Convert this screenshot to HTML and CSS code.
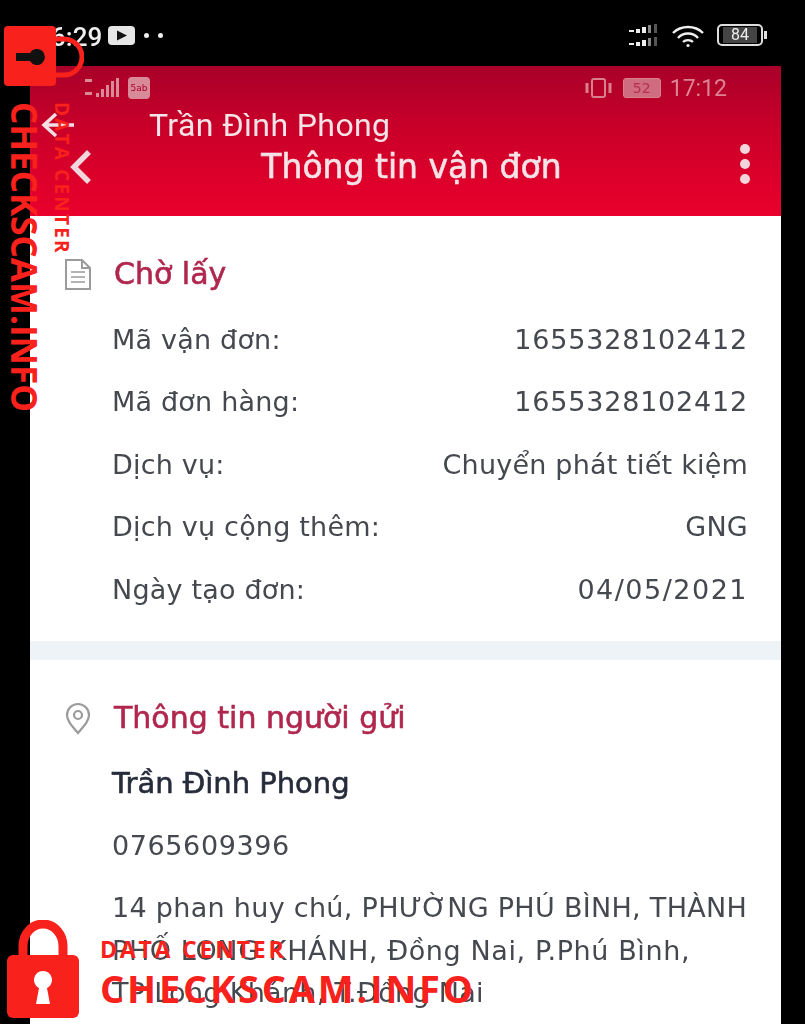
FILE: index.html
```html
<!DOCTYPE html>
<html lang="vi">
<head>
    <meta charset="UTF-8">
    <meta name="viewport" content="width=device-width, initial-scale=1.0">
    <title>Thông tin vận đơn</title>
    <link rel="stylesheet" href="styles.css">
</head>
<body>

<div class="page">
    <div class="status-bar">
        <div class="status-left">
            <span class="status-time">6:29</span>
            <svg class="yt-icon" width="27" height="19" viewBox="0 0 27 19">
                <rect width="27" height="19" rx="4" fill="#e6e6e6"/>
                <path d="M9 4.5 L19 9.5 L9 14.5 Z" fill="#111"/>
            </svg>
            <span class="status-dot"></span>
            <span class="status-dot"></span>
        </div>
        <div class="status-right">
            <svg width="30" height="24" viewBox="0 0 30 24" fill="#eee">
                <rect x="0" y="6" width="5" height="2"/><rect x="7" y="5" width="4" height="4"/><rect x="13" y="3" width="4" height="6"/><rect x="19" y="1" width="3" height="8" fill="#888"/><rect x="25" y="0" width="3" height="9" fill="#555"/>
                <rect x="0" y="19" width="5" height="2"/><rect x="7" y="18" width="4" height="4"/><rect x="13" y="16" width="4" height="6"/><rect x="19" y="14" width="3" height="8" fill="#888"/><rect x="25" y="13" width="3" height="9" fill="#555"/>
            </svg>
            <svg class="wifi" width="32" height="26" viewBox="0 0 32 26" fill="none" stroke="#eee" stroke-width="2.4">
                <path d="M1 9 C9 1 23 1 31 9"/>
                <path d="M6 14 C11 8 21 8 26 14"/>
                <path d="M11 18 C13.500 15.500 18.500 15.500 21 18"/>
                <circle cx="16" cy="21.500" r="1.600" fill="#eee" stroke="none"/>
            </svg>
            <div class="battery"><span>84</span></div>
            <span class="battery-tip"></span>
        </div>
    </div>

    <div class="screen">
        <header class="app-header">
            <div class="inner-status">
                <div class="inner-left">
                    <svg width="34" height="22" viewBox="0 0 34 22" fill="#d98a98">
                        <rect x="0" y="2" width="7" height="3"/><rect x="0" y="15" width="7" height="3"/>
                        <rect x="11" y="16" width="3" height="4"/><rect x="16" y="12" width="3" height="8"/><rect x="21" y="8" width="3" height="12"/><rect x="26" y="4" width="3" height="16"/><rect x="31" y="1" width="3" height="19"/>
                    </svg>
                    <span class="sim-badge">5ab</span>
                </div>
                <div class="inner-right">
                    <svg width="27" height="22" viewBox="0 0 27 22" fill="none" stroke="#d9808f" stroke-width="2">
                        <rect x="7" y="2" width="13" height="18" rx="2"/>
                        <path d="M2 6 V16 M25 6 V16" stroke-width="3"/>
                    </svg>
                    <div class="inner-battery"><span>52</span></div>
                    <span class="inner-time">17:12</span>
                </div>
            </div>
            <div class="name-row">
                <svg width="34" height="34" viewBox="0 0 34 34" fill="none" stroke="#f5dfe4" stroke-width="3.500">
                    <path d="M15 6 L3 17 L15 28 M3 17 H33"/>
                </svg>
                <span class="name-text">Trần Đình Phong</span>
            </div>
            <div class="title-row">
                <svg width="24" height="36" viewBox="0 0 24 36" fill="none" stroke="#f3d5dc" stroke-width="5.500">
                    <path d="M20 3 L5 18 L20 33"/>
                </svg>
                <span class="title-text">Thông tin vận đơn</span>
                <div class="more-dots"><span></span><span></span><span></span></div>
            </div>
        </header>

        <section class="panel panel-order">
            <div class="panel-head">
                <svg class="panel-icon" width="28" height="33" viewBox="0 0 28 33" fill="none" stroke="#9b9b9b" stroke-width="2">
                    <path d="M2 2 H18 L26 10 V31 H2 Z M18 2 V10 H26"/>
                    <path d="M7 14 H21 M7 19 H21 M7 24 H21" stroke-width="1.500"/>
                </svg>
                <h2>Chờ lấy</h2>
            </div>
            <div class="info-row"><span>Mã vận đơn:</span><span class="num">1655328102412</span></div>
            <div class="info-row"><span>Mã đơn hàng:</span><span class="num">1655328102412</span></div>
            <div class="info-row"><span>Dịch vụ:</span><span>Chuyển phát tiết kiệm</span></div>
            <div class="info-row"><span>Dịch vụ cộng thêm:</span><span>GNG</span></div>
            <div class="info-row"><span>Ngày tạo đơn:</span><span class="date">04/05/2021</span></div>
        </section>

        <div class="divider"></div>

        <section class="panel panel-sender">
            <div class="panel-head">
                <svg class="panel-icon" width="28" height="33" viewBox="0 0 28 33" fill="none" stroke="#9b9b9b" stroke-width="2.200">
                    <path d="M14 31 C8 24 3 19 3 13 A11 11 0 0 1 25 13 C25 19 20 24 14 31 Z"/>
                    <circle cx="14" cy="13" r="4"/>
                </svg>
                <h2>Thông tin người gửi</h2>
            </div>
            <div class="sender-name">Trần Đình Phong</div>
            <div class="sender-phone">0765609396</div>
            <p class="sender-address">14 phan huy chú, PHƯỜNG PHÚ BÌNH, THÀNH<br><span class="wide-line">PHỐ LONG KHÁNH, Đồng Nai, P.Phú Bình,</span><br>TP Long Khánh, T.Đồng Nai</p>
        </section>
    </div>

    <div class="mark-top">
        <svg class="mark-lock-side" width="84" height="62" viewBox="0 0 84 62">
            <path d="M50 13 H64 A18 18 0 0 1 64 49 H50" fill="none" stroke="#f8211c" stroke-width="5"/>
            <rect x="4" y="0" width="52" height="60" rx="4" fill="#f8211c"/>
            <path d="M16 27 H30 A8 8 0 1 1 30 35 H16 Z" fill="#111"/>
        </svg>
    </div>
    <div class="mark-side">
        <span class="mark-side-big">CHECKSCAM.INFO</span>
        <span class="mark-side-small">DATA CENTER</span>
    </div>
    <div class="mark-bottom">
        <svg width="74" height="100" viewBox="0 0 74 100">
            <path d="M17 40 V26 A20 22 0 0 1 57 26 V40" fill="none" stroke="#f8211c" stroke-width="9"/>
            <rect x="1" y="35" width="72" height="63" rx="6" fill="#f8211c"/>
            <path d="M30 84 L33 68 A9 9 0 1 1 41 68 L44 84 Z" fill="#fff"/>
        </svg>
        <div class="mark-words">
            <span class="mark-small">DATA CENTER</span>
            <span class="mark-big">CHECKSCAM.INFO</span>
        </div>
    </div>
</div>

</body>
</html>
```

FILE: styles.css
```css
* {
    margin: 0;
    padding: 0;
    box-sizing: border-box;
}

body {
    background-color: #000;
    font-family: 'DejaVu Sans', sans-serif;
}

.page {
    position: relative;
    width: 805px;
    height: 1024px;
    overflow: hidden;
}

/* phone status bar */
.status-bar {
    height: 66px;
    display: flex;
    justify-content: space-between;
    padding: 24px 38px 0 51px;
    color: #eee;
    filter: blur(0.4px);
}

.status-left {
    display: flex;
    align-items: flex-start;
    gap: 6px;
}

.status-time {
    font-family: 'Roboto', sans-serif;
    font-size: 26px;
    font-weight: 500;
    line-height: 26px;
}

.yt-icon {
    margin-top: 2px;
}

.status-dot {
    width: 5px;
    height: 5px;
    margin-top: 9px;
    margin-left: 3px;
    border-radius: 50%;
    background-color: #eee;
}

.status-right {
    display: flex;
    align-items: flex-start;
    gap: 13px;
}

.battery {
    width: 46px;
    height: 22px;
    border: 2px solid #ddd;
    border-radius: 5px;
    text-align: center;
    font-family: 'Roboto', sans-serif;
    font-size: 16px;
    line-height: 19px;
    color: #eee;
}

.battery span {
    display: block;
    margin: 1px 4px;
    line-height: 16px;
    background-color: #444;
}

.battery-tip {
    width: 3px;
    height: 8px;
    margin: 7px 0 0 -12px;
    background-color: #ddd;
}

/* the photographed screen */
.screen {
    width: 751px;
    height: 958px;
    margin-left: 30px;
    background-color: #fff;
    overflow: hidden;
    filter: blur(0.6px);
}

.app-header {
    height: 150px;
    background: linear-gradient(#a80029, #c80029 40%, #ea002c);
    color: #f5e3e7;
}

.inner-status {
    height: 40px;
    display: flex;
    justify-content: space-between;
    align-items: center;
    padding: 4px 54px 0 55px;
}

.inner-left,
.inner-right {
    display: flex;
    align-items: center;
    gap: 9px;
}

.sim-badge {
    width: 22px;
    height: 22px;
    border-radius: 4px;
    background-color: #d98a98;
    color: #a80029;
    font-size: 9px;
    line-height: 22px;
    text-align: center;
}

.inner-battery {
    width: 38px;
    height: 20px;
    margin-left: 2px;
    border: 1px solid #d9808f;
    border-radius: 3px;
    color: #b5304f;
    font-size: 14px;
    line-height: 18px;
    text-align: center;
    background-color: #cf6c80;
}

.inner-time {
    font-family: 'Roboto', sans-serif;
    font-size: 23px;
    color: #dc8494;
}

.name-row {
    height: 38px;
    display: flex;
    align-items: center;
    padding-left: 11px;
}

.name-text {
    margin-left: 74px;
    font-family: 'Roboto', sans-serif;
    font-size: 32px;
    line-height: 38px;
    letter-spacing: 0.4px;
}

.title-row {
    height: 46px;
    display: flex;
    align-items: center;
    justify-content: space-between;
    padding: 0 31px 0 39px;
}

.title-text {
    flex: 1;
    margin-right: 10px;
    text-align: center;
    font-size: 33px;
    line-height: 46px;
    white-space: nowrap;
    -webkit-text-stroke: 0.6px #f5e3e7;
}

.more-dots {
    display: flex;
    flex-direction: column;
    gap: 5px;
    margin-top: -6px;
}

.more-dots span {
    width: 10px;
    height: 10px;
    border-radius: 50%;
    background-color: #f3d5dc;
}

/* sections */
.panel {
    padding-left: 34px;
    padding-right: 33px;
}

.panel-order {
    height: 425px;
    padding-top: 36px;
}

.panel-head {
    height: 44px;
    display: flex;
    align-items: center;
    gap: 22px;
    margin-bottom: 12px;
}

.panel-head h2 {
    font-size: 30px;
    font-weight: 400;
    line-height: 44px;
    color: #b0274e;
    white-space: nowrap;
    -webkit-text-stroke: 0.6px #b0274e;
}

.info-row {
    height: 62.5px;
    display: flex;
    justify-content: space-between;
    align-items: center;
    margin-left: 48px;
    font-size: 27px;
    letter-spacing: 0.2px;
    color: #45494f;
    white-space: nowrap;
}

.num {
    letter-spacing: 0.8px;
}

.date {
    letter-spacing: 1.5px;
}

.divider {
    height: 19px;
    background-color: #eef3f8;
}

.panel-sender {
    padding-top: 36px;
}

.panel-sender .panel-head {
    margin-bottom: 0;
}

.sender-name {
    margin: 21px 0 0 48px;
    height: 44px;
    font-size: 29px;
    line-height: 44px;
    color: #262c3a;
    -webkit-text-stroke: 0.6px #262c3a;
}

.sender-phone {
    margin: 19px 0 0 48px;
    height: 44px;
    font-size: 27px;
    line-height: 44px;
    letter-spacing: 0.6px;
    color: #45494f;
}

.sender-address {
    margin: 19px 0 0 48px;
    font-size: 27px;
    line-height: 42.5px;
    letter-spacing: 0.3px;
    color: #45494f;
    white-space: nowrap;
}

.wide-line {
    letter-spacing: 0.6px;
}

/* watermark laid over the picture */
.mark-top {
    position: absolute;
    left: 0;
    top: 26px;
    line-height: 0;
}

.mark-side {
    position: absolute;
    left: 6px;
    top: 102px;
    display: flex;
    flex-direction: column-reverse;
    gap: 9px;
    writing-mode: vertical-rl;
    font-family: 'Open Sans', sans-serif;
    font-weight: 700;
    color: #f8211c;
    white-space: nowrap;
}

.mark-side-big {
    font-size: 35px;
    line-height: 37px;
}

.mark-side-small {
    font-size: 19px;
    line-height: 20px;
    letter-spacing: 2.200px;
}

.mark-bottom {
    position: absolute;
    left: 6px;
    top: 920px;
    display: flex;
    gap: 20px;
}

.mark-words {
    display: flex;
    flex-direction: column;
    padding-top: 15px;
    font-family: 'Open Sans', sans-serif;
    font-weight: 700;
    color: #f8211c;
    white-space: nowrap;
}

.mark-small {
    font-size: 23px;
    line-height: 28px;
    letter-spacing: 2.800px;
}

.mark-big {
    font-size: 38px;
    line-height: 50px;
    letter-spacing: 2.800px;
}
```
